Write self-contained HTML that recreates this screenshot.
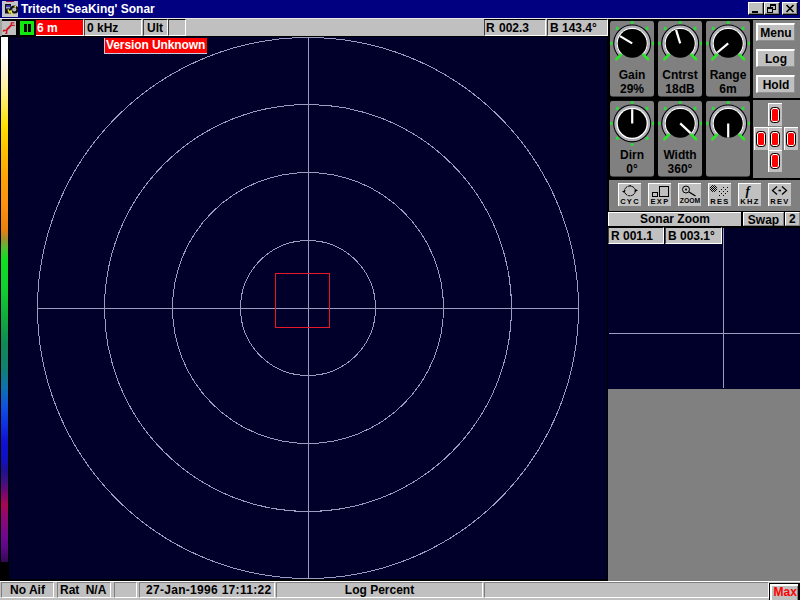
<!DOCTYPE html>
<html><head><meta charset="utf-8"><title>Tritech 'SeaKing' Sonar</title>
<style>
html,body{margin:0;padding:0;}
body{width:800px;height:600px;overflow:hidden;position:relative;background:#01002b;font-family:"Liberation Sans",sans-serif;font-weight:bold;font-size:12px;color:#000;line-height:1;}
div,span,i{position:absolute;box-sizing:border-box;}
.sunk{background:#c0c0c0;border-top:1px solid #000;border-left:1px solid #404040;border-bottom:1px solid #fff;border-right:1px solid #fff;white-space:pre;overflow:hidden;}
.sunk span{left:2px;top:2px;}
.rais{background:#c0c0c0;border-top:1px solid #fff;border-left:1px solid #fff;border-bottom:1px solid #808080;border-right:1px solid #808080;}
.kt{font-family:"Liberation Sans",sans-serif;font-weight:bold;font-size:12px;fill:#000;}
.btn{background:#c0c0c0;border-top:2px solid #fff;border-left:2px solid #fff;border-bottom:1px solid #909090;border-right:1px solid #909090;text-align:center;width:39px;height:18px;left:756px;}
.btn span{left:0;right:0;top:1.500px;text-align:center;}
.ab{width:14px;height:23px;background:#c0c0c0;border-top:1px solid #fff;border-left:1px solid #fff;}
.ab i{left:1px;top:3px;width:10px;height:16px;border-radius:3.500px;background:#f00;border:1px solid #000;box-shadow:inset 0 0 0 1px #fff;}
.ib{width:23px;height:23px;top:183px;background:#c0c0c0;border-top:1px solid #fff;border-left:1px solid #fff;}
.ib span{left:0;right:0;bottom:1px;text-align:center;font-size:7.500px;letter-spacing:1.3px;font-weight:bold;}
.ib svg{position:absolute;left:-1px;top:-1px;}
.tb{width:16px;height:13px;top:2px;background:#c0c0c0;border-top:1px solid #fff;border-left:1px solid #fff;border-bottom:1px solid #000;border-right:1px solid #000;box-shadow:inset -1px -1px 0 #808080;}
.st{border-top-color:#808080;border-left-color:#808080;}
</style></head><body>
<!-- title bar -->
<div style="left:0;top:0;width:800px;height:18px;background:#000080;"></div>
<div style="left:2px;top:1px;width:16px;height:16px;background:#c4c4cc;">
 <svg width="16" height="16" style="position:absolute;left:0;top:0"><rect x="4" y="0" width="8" height="1" fill="#a01848"/><rect x="3" y="3" width="6" height="9.500" fill="#101018"/><rect x="4" y="4" width="4.500" height="1.700" fill="#2828a0"/><rect x="4" y="5.700" width="4.500" height="1.800" fill="#9c9cd0"/><circle cx="12.300" cy="8.500" r="3.100" fill="#b8b8c0" stroke="#101010" stroke-width="2"/><path d="M6 8.500 L7.500 11.500 L9 10 L10.500 14.500" stroke="#e8e040" stroke-width="1.600" fill="none"/><circle cx="13.300" cy="5.700" r="1" fill="#e8e040"/></svg>
</div>
<span style="left:21px;top:3px;color:#fff;white-space:pre;">Tritech 'SeaKing' Sonar</span>
<div class="tb" style="left:748px"><i style="left:3px;top:8px;width:6px;height:2px;background:#000"></i></div>
<div class="tb" style="left:764px"><i style="left:5px;top:1px;width:6px;height:6px;border:1px solid #000;border-top:2px solid #000"></i><i style="left:2px;top:4px;width:6px;height:6px;border:1px solid #000;border-top:2px solid #000;background:#c0c0c0"></i></div>
<div class="tb" style="left:782px"><svg width="14" height="12" style="position:absolute;left:0;top:0"><path d="M3.5 2 L10.5 9 M10.5 2 L3.5 9" stroke="#000" stroke-width="1.7"/></svg></div>

<!-- toolbar -->
<div style="left:0;top:18px;width:608px;height:18px;background:#c0c0c0;border-top:1px solid #e8e8e8;"></div>
<div style="left:0;top:36px;width:608px;height:1px;background:#000;"></div>
<div style="left:0;top:19px;width:2px;height:17px;background:#a0a4a0;"></div><div style="left:2px;top:19px;width:34px;height:17px;background:#000;"></div>
<div style="left:2px;top:21px;width:14px;height:14px;background:#c0c0c0;"><svg width="14" height="14" style="position:absolute;left:0;top:0"><g fill="none" stroke="#d01020"><path d="M4.5 9 L9.300 4.200" stroke-width="1.8"/><path d="M12.300 1.800 H9.300 V4.300 H12.800" stroke-width="1.3"/><path d="M1.500 10.800 V9.500 H4.700 V12.300 H3.200" stroke-width="1.3"/></g></svg></div>
<div style="left:20px;top:21px;width:14px;height:14px;background:#10e810;"><i style="left:3.500px;top:3px;width:3px;height:8px;background:#000"></i><i style="left:8px;top:3px;width:2.500px;height:8px;background:#000"></i></div>
<div class="sunk" style="left:36px;top:19px;width:48px;height:17px;background:#f00;color:#fff;border-left:none;"><span style="left:1px">6 m</span></div>
<div class="sunk" style="left:84px;top:19px;width:58px;height:17px;"><span>0 kHz</span></div>
<div class="sunk" style="left:143px;top:19px;width:25px;height:17px;"><span style="left:3px">Ult</span></div>
<div class="sunk" style="left:168px;top:19px;width:18px;height:17px;"></div>
<div class="sunk" style="left:484px;top:19px;width:62px;height:17px;"><span style="left:1px;word-spacing:1px">R 002.3</span></div>
<div class="sunk" style="left:547px;top:19px;width:61px;height:17px;"><span>B 143.4°</span></div>

<!-- main plot -->
<div style="left:0;top:37px;width:608px;height:543px;background:#01002b;"></div>
<div style="left:1px;top:37px;width:7px;height:543px;background:linear-gradient(to bottom, #ffffff 0.00%, #ffffff 3.13%, #fff4c8 7.00%, #ffee70 11.42%, #ffe000 16.39%, #ffc000 20.81%, #ffa008 26.34%, #ff9010 30.76%, #e88010 35.54%, #a09030 37.20%, #50c030 38.86%, #10e020 41.07%, #10d030 46.59%, #10a840 52.12%, #108858 56.54%, #108070 60.96%, #1070b0 64.64%, #1050e0 68.14%, #1030e0 71.45%, #1010d0 74.77%, #1010c0 77.90%, #201090 79.93%, #401080 81.95%, #700870 83.79%, #a80850 86.19%, #900870 88.21%, #700890 91.90%, #5c0888 93.92%, #400868 95.76%, #300850 96.69%, #000000 96.78%, #000000 100.00%);"></div>
<div style="left:0;top:37px;width:1px;height:544px;background:#000;"></div><div style="left:8px;top:37px;width:1px;height:544px;background:#000;"></div>
<svg width="608" height="543" style="position:absolute;left:0;top:37px" shape-rendering="crispEdges">
 <g fill="none" stroke="#9c9cc0" stroke-width="1">
  <circle cx="308" cy="271" r="270.5"/>
  <circle cx="308" cy="271" r="203.5"/>
  <circle cx="308" cy="271" r="135.5"/>
  <circle cx="308" cy="271" r="67.5"/>
  <line x1="308.5" y1="0" x2="308.5" y2="542"/>
  <line x1="37" y1="271.5" x2="579" y2="271.5"/>
  <rect x="275.5" y="236.500" width="54" height="54" stroke="#e81828"/>
 </g>
</svg>
<div style="left:104px;top:38px;width:103px;height:16px;background:#f00;border-left:1px solid #c8c8e0;border-bottom:1px solid #c8c8e0;color:#fff;white-space:pre;"><span style="left:1px;top:1px;letter-spacing:-0.1px">Version Unknown</span></div>
<div style="left:0;top:579px;width:608px;height:2px;background:#000;"></div>
<div style="left:607px;top:37px;width:1px;height:544px;background:#000;"></div>

<!-- right panel -->
<div style="left:608px;top:18px;width:192px;height:1px;background:#e8e8e8;"></div>
<div style="left:608px;top:19px;width:192px;height:208px;background:#000;"></div>
<svg width="192" height="208" style="position:absolute;left:608px;top:19px">
<svg x="2" y="1.7" width="44" height="76" overflow="hidden">
<rect x="0" y="0" width="44" height="76" rx="3" ry="3" fill="#808080"/>
<circle cx="1.20" cy="22.70" r="1.7" fill="#30d840"/>
<circle cx="7.35" cy="7.85" r="1.7" fill="#30d840"/>
<circle cx="22.20" cy="1.70" r="1.7" fill="#30d840"/>
<circle cx="37.05" cy="7.85" r="1.7" fill="#30d840"/>
<circle cx="43.20" cy="22.70" r="1.7" fill="#30d840"/>
<path d="M10.82 35.33 A17.0 17.0 0 1 1 33.58 35.33" fill="none" stroke="#000" stroke-width="4.0"/>
<path d="M11.03 35.11 A16.7 16.7 0 1 1 33.37 35.11" fill="none" stroke="#b0b0b8" stroke-width="2.4"/>
<path d="M12.16 33.85 A15.0 15.0 0 1 1 32.24 33.85" fill="none" stroke="#fff" stroke-width="1.3"/>
<circle cx="22.2" cy="22.7" r="14.4" fill="#000"/>
<line x1="10.89" y1="34.01" x2="6.29" y2="38.61" stroke="#28e828" stroke-width="2.6" stroke-linecap="round"/>
<line x1="33.51" y1="34.01" x2="38.11" y2="38.61" stroke="#28e828" stroke-width="2.6" stroke-linecap="round"/>
<line x1="22.20" y1="22.70" x2="10.03" y2="15.39" stroke="#fff" stroke-width="2.2"/>
<text x="22" y="58.5" text-anchor="middle" class="kt">Gain</text>
<text x="22" y="72" text-anchor="middle" class="kt">29%</text>
</svg>
<svg x="50" y="1.7" width="44" height="76" overflow="hidden">
<rect x="0" y="0" width="44" height="76" rx="3" ry="3" fill="#808080"/>
<circle cx="1.20" cy="22.70" r="1.7" fill="#30d840"/>
<circle cx="7.35" cy="7.85" r="1.7" fill="#30d840"/>
<circle cx="22.20" cy="1.70" r="1.7" fill="#30d840"/>
<circle cx="37.05" cy="7.85" r="1.7" fill="#30d840"/>
<circle cx="43.20" cy="22.70" r="1.7" fill="#30d840"/>
<path d="M10.82 35.33 A17.0 17.0 0 1 1 33.58 35.33" fill="none" stroke="#000" stroke-width="4.0"/>
<path d="M11.03 35.11 A16.7 16.7 0 1 1 33.37 35.11" fill="none" stroke="#b0b0b8" stroke-width="2.4"/>
<path d="M12.16 33.85 A15.0 15.0 0 1 1 32.24 33.85" fill="none" stroke="#fff" stroke-width="1.3"/>
<circle cx="22.2" cy="22.7" r="14.4" fill="#000"/>
<line x1="10.89" y1="34.01" x2="6.29" y2="38.61" stroke="#28e828" stroke-width="2.6" stroke-linecap="round"/>
<line x1="33.51" y1="34.01" x2="38.11" y2="38.61" stroke="#28e828" stroke-width="2.6" stroke-linecap="round"/>
<line x1="22.20" y1="22.70" x2="18.05" y2="9.12" stroke="#fff" stroke-width="2.2"/>
<text x="22" y="58.5" text-anchor="middle" class="kt">Cntrst</text>
<text x="22" y="72" text-anchor="middle" class="kt">18dB</text>
</svg>
<svg x="98" y="1.7" width="44" height="76" overflow="hidden">
<rect x="0" y="0" width="44" height="76" rx="3" ry="3" fill="#808080"/>
<circle cx="1.20" cy="22.70" r="1.7" fill="#30d840"/>
<circle cx="7.35" cy="7.85" r="1.7" fill="#30d840"/>
<circle cx="22.20" cy="1.70" r="1.7" fill="#30d840"/>
<circle cx="37.05" cy="7.85" r="1.7" fill="#30d840"/>
<circle cx="43.20" cy="22.70" r="1.7" fill="#30d840"/>
<path d="M10.82 35.33 A17.0 17.0 0 1 1 33.58 35.33" fill="none" stroke="#000" stroke-width="4.0"/>
<path d="M11.03 35.11 A16.7 16.7 0 1 1 33.37 35.11" fill="none" stroke="#b0b0b8" stroke-width="2.4"/>
<path d="M12.16 33.85 A15.0 15.0 0 1 1 32.24 33.85" fill="none" stroke="#fff" stroke-width="1.3"/>
<circle cx="22.2" cy="22.7" r="14.4" fill="#000"/>
<line x1="10.89" y1="34.01" x2="6.29" y2="38.61" stroke="#28e828" stroke-width="2.6" stroke-linecap="round"/>
<line x1="33.51" y1="34.01" x2="38.11" y2="38.61" stroke="#28e828" stroke-width="2.6" stroke-linecap="round"/>
<line x1="22.20" y1="22.70" x2="11.32" y2="31.83" stroke="#fff" stroke-width="2.2"/>
<text x="22" y="58.5" text-anchor="middle" class="kt">Range</text>
<text x="22" y="72" text-anchor="middle" class="kt">6m</text>
</svg>
<svg x="2" y="81.7" width="44" height="76" overflow="hidden">
<rect x="0" y="0" width="44" height="76" rx="3" ry="3" fill="#808080"/>
<circle cx="7.35" cy="37.55" r="1.7" fill="#30d840"/>
<circle cx="1.20" cy="22.70" r="1.7" fill="#30d840"/>
<circle cx="7.35" cy="7.85" r="1.7" fill="#30d840"/>
<circle cx="22.20" cy="1.70" r="1.7" fill="#30d840"/>
<circle cx="37.05" cy="7.85" r="1.7" fill="#30d840"/>
<circle cx="43.20" cy="22.70" r="1.7" fill="#30d840"/>
<circle cx="37.05" cy="37.55" r="1.7" fill="#30d840"/>
<circle cx="22.20" cy="43.70" r="1.7" fill="#30d840"/>
<circle cx="22.2" cy="22.7" r="19" fill="#000"/>
<circle cx="22.2" cy="22.7" r="17.9" fill="#b0b0b8"/>
<circle cx="22.2" cy="22.7" r="15.7" fill="#fff"/>
<circle cx="22.2" cy="22.7" r="14.4" fill="#000"/>
<line x1="22.20" y1="22.70" x2="22.20" y2="8.50" stroke="#fff" stroke-width="2.2"/>
<text x="22" y="58.5" text-anchor="middle" class="kt">Dirn</text>
<text x="22" y="72" text-anchor="middle" class="kt">0°</text>
</svg>
<svg x="50" y="81.7" width="44" height="76" overflow="hidden">
<rect x="0" y="0" width="44" height="76" rx="3" ry="3" fill="#808080"/>
<circle cx="1.20" cy="22.70" r="1.7" fill="#30d840"/>
<circle cx="7.35" cy="7.85" r="1.7" fill="#30d840"/>
<circle cx="22.20" cy="1.70" r="1.7" fill="#30d840"/>
<circle cx="37.05" cy="7.85" r="1.7" fill="#30d840"/>
<circle cx="43.20" cy="22.70" r="1.7" fill="#30d840"/>
<path d="M10.82 35.33 A17.0 17.0 0 1 1 33.58 35.33" fill="none" stroke="#000" stroke-width="4.0"/>
<path d="M11.03 35.11 A16.7 16.7 0 1 1 33.37 35.11" fill="none" stroke="#b0b0b8" stroke-width="2.4"/>
<path d="M12.16 33.85 A15.0 15.0 0 1 1 32.24 33.85" fill="none" stroke="#fff" stroke-width="1.3"/>
<circle cx="22.2" cy="22.7" r="14.4" fill="#000"/>
<line x1="10.89" y1="34.01" x2="6.29" y2="38.61" stroke="#28e828" stroke-width="2.6" stroke-linecap="round"/>
<line x1="33.51" y1="34.01" x2="38.11" y2="38.61" stroke="#28e828" stroke-width="2.6" stroke-linecap="round"/>
<line x1="22.20" y1="22.70" x2="32.59" y2="32.38" stroke="#fff" stroke-width="2.2"/>
<text x="22" y="58.5" text-anchor="middle" class="kt">Width</text>
<text x="22" y="72" text-anchor="middle" class="kt">360°</text>
</svg>
<svg x="98" y="81.7" width="44" height="76" overflow="hidden">
<rect x="0" y="0" width="44" height="76" rx="3" ry="3" fill="#808080"/>
<circle cx="1.20" cy="22.70" r="1.7" fill="#30d840"/>
<circle cx="7.35" cy="7.85" r="1.7" fill="#30d840"/>
<circle cx="22.20" cy="1.70" r="1.7" fill="#30d840"/>
<circle cx="37.05" cy="7.85" r="1.7" fill="#30d840"/>
<circle cx="43.20" cy="22.70" r="1.7" fill="#30d840"/>
<path d="M10.82 35.33 A17.0 17.0 0 1 1 33.58 35.33" fill="none" stroke="#000" stroke-width="4.0"/>
<path d="M11.03 35.11 A16.7 16.7 0 1 1 33.37 35.11" fill="none" stroke="#b0b0b8" stroke-width="2.4"/>
<path d="M12.16 33.85 A15.0 15.0 0 1 1 32.24 33.85" fill="none" stroke="#fff" stroke-width="1.3"/>
<circle cx="22.2" cy="22.7" r="14.4" fill="#000"/>
<line x1="10.89" y1="34.01" x2="6.29" y2="38.61" stroke="#28e828" stroke-width="2.6" stroke-linecap="round"/>
<line x1="33.51" y1="34.01" x2="38.11" y2="38.61" stroke="#28e828" stroke-width="2.6" stroke-linecap="round"/>
<line x1="22.20" y1="22.70" x2="22.20" y2="36.90" stroke="#fff" stroke-width="2.2"/>
</svg>
</svg>
<div style="left:753px;top:20px;width:47px;height:78px;background:#808080;"></div>
<div class="btn" style="top:23px"><span>Menu</span></div>
<div class="btn" style="top:49px"><span>Log</span></div>
<div class="btn" style="top:75px"><span>Hold</span></div>
<div style="left:753px;top:100px;width:47px;height:78px;background:#808080;"></div>
<div class="ab" style="left:768px;top:103px;height:23px"><i style="top:3px"></i></div><div class="ab" style="left:754px;top:127px;height:23px"><i style="top:3px"></i></div><div class="ab" style="left:768px;top:127px;height:23px"><i style="top:3px"></i></div><div class="ab" style="left:784px;top:127px;height:23px"><i style="top:3px"></i></div><div class="ab" style="left:768px;top:150px;height:22px"><i style="top:2px"></i></div>
<!-- icon row -->
<div style="left:609px;top:180px;width:191px;height:31px;background:#808080;"></div>
<div class="ib" style="left:618px"><svg width="23" height="16"><ellipse cx="11.9" cy="7.900" rx="5.4" ry="4.9" fill="none" stroke="#000" stroke-width="1" stroke-dasharray="3 0.6" /><path d="M4 8.500 l3.500-1.500 l-1 3z M20 7.500 l-3.500 1.500 l1-3z M11 3 l1.500-1 l1 1.500z" fill="#000"/></svg><span>CYC</span></div>
<div class="ib" style="left:648px"><svg width="23" height="16"><rect x="4.5" y="9.500" width="5" height="4" fill="none" stroke="#000"/><rect x="11.5" y="3.500" width="9" height="10" fill="none" stroke="#000"/></svg><span>EXP</span></div>
<div class="ib" style="left:678px"><svg width="23" height="16"><circle cx="8" cy="6.500" r="3.5" fill="none" stroke="#000"/><circle cx="8" cy="6.500" r="1" fill="#000"/><path d="M11 9 L17.500 13" stroke="#000" stroke-width="1.4"/></svg><span style="letter-spacing:0px;font-size:6.800px;bottom:1.500px">ZOOM</span></div>
<div class="ib" style="left:708px"><svg width="23" height="16"><defs><pattern id="dp" width="2" height="2" patternUnits="userSpaceOnUse"><rect width="1" height="1" fill="#000"/><rect x="1" y="1" width="1" height="1" fill="#000"/></pattern></defs><circle cx="5.500" cy="5.500" r="3.6" fill="url(#dp)"/><g fill="#000"><rect x="15" y="4" width="1" height="1"/><rect x="19" y="4" width="1" height="1"/><rect x="13" y="6" width="1" height="1"/><rect x="17" y="6" width="1" height="1"/><rect x="11" y="8" width="1" height="1"/><rect x="15" y="8" width="1" height="1"/><rect x="19" y="8" width="1" height="1"/><rect x="13" y="10" width="1" height="1"/><rect x="17" y="10" width="1" height="1"/><rect x="11" y="12" width="1" height="1"/><rect x="15" y="12" width="1" height="1"/></g></svg><span>RES</span></div>
<div class="ib" style="left:738px"><svg width="23" height="16"><text x="7.500" y="12" font-family="Liberation Serif,serif" font-style="italic" font-weight="bold" font-size="13" fill="#000">f</text></svg><span>KHZ</span></div>
<div class="ib" style="left:768px"><svg width="23" height="16"><path d="M9 3.500 L4.500 7.500 L9 11.500 M14 3.500 L18.500 7.500 L14 11.500 M10.500 7.500 h2.500" fill="none" stroke="#000" stroke-width="1.3"/></svg><span>REV</span></div>
<!-- sonar zoom bar -->
<div style="left:608px;top:212px;width:133px;height:14px;background:#c0c0c0;border-top:1px solid #fff;border-left:1px solid #fff;"><span style="left:0;right:0;top:0px;text-align:center;">Sonar Zoom</span></div>
<div class="rais" style="left:743px;top:212px;width:41px;height:14px;"><span style="left:0;right:0;top:1px;text-align:center;">Swap</span></div>
<div class="rais" style="left:785px;top:212px;width:15px;height:14px;"><span style="left:3px;top:0px;">2</span></div>
<!-- zoom window -->
<div style="left:608px;top:227px;width:192px;height:162px;background:#01002b;border-top:1px solid #000;"></div>
<div style="left:723px;top:228px;width:1px;height:160px;background:#9c9cc0;"></div>
<div style="left:609px;top:333px;width:191px;height:1px;background:#9c9cc0;"></div>
<div class="sunk" style="left:608px;top:227px;width:56px;height:17px;"><span>R 001.1</span></div>
<div class="sunk" style="left:665px;top:227px;width:57px;height:17px;"><span>B 003.1°</span></div>
<div style="left:608px;top:389px;width:192px;height:192px;background:#808080;"></div>

<!-- status bar -->
<div style="left:0;top:581px;width:800px;height:19px;background:#c0c0c0;border-top:1px solid #fff;"></div>
<div style="left:0;top:597px;width:800px;height:1px;background:#e8e8e8;"></div>
<div class="sunk st" style="left:1px;top:582px;width:53px;height:16px;"><span style="left:0;right:0;text-align:center;top:1px">No Aif</span></div>
<div class="sunk st" style="left:57px;top:582px;width:54px;height:16px;"><span style="left:2px;top:1px;word-spacing:3px">Rat N/A</span></div>
<div class="sunk st" style="left:114px;top:582px;width:23px;height:16px;"></div>
<div class="sunk st" style="left:139px;top:582px;width:136px;height:16px;"><span style="left:6px;top:1px;letter-spacing:0.3px">27-Jan-1996 17:11:22</span></div>
<div class="sunk st" style="left:276px;top:582px;width:207px;height:16px;"><span style="left:0;right:0;text-align:center;top:1px">Log Percent</span></div>
<div class="sunk st" style="left:484px;top:582px;width:285px;height:16px;"></div>
<div style="left:769px;top:583px;width:31px;height:17px;color:#f00;background:#c0c0c0;border-left:1px solid #000;border-top:1px solid #000;border-right:2px solid #000;box-shadow:inset 2px 2px 0 #fff, inset -1px 0 0 #808080;"><span style="left:3.500px;top:2px;">Max</span></div>
</body></html>
